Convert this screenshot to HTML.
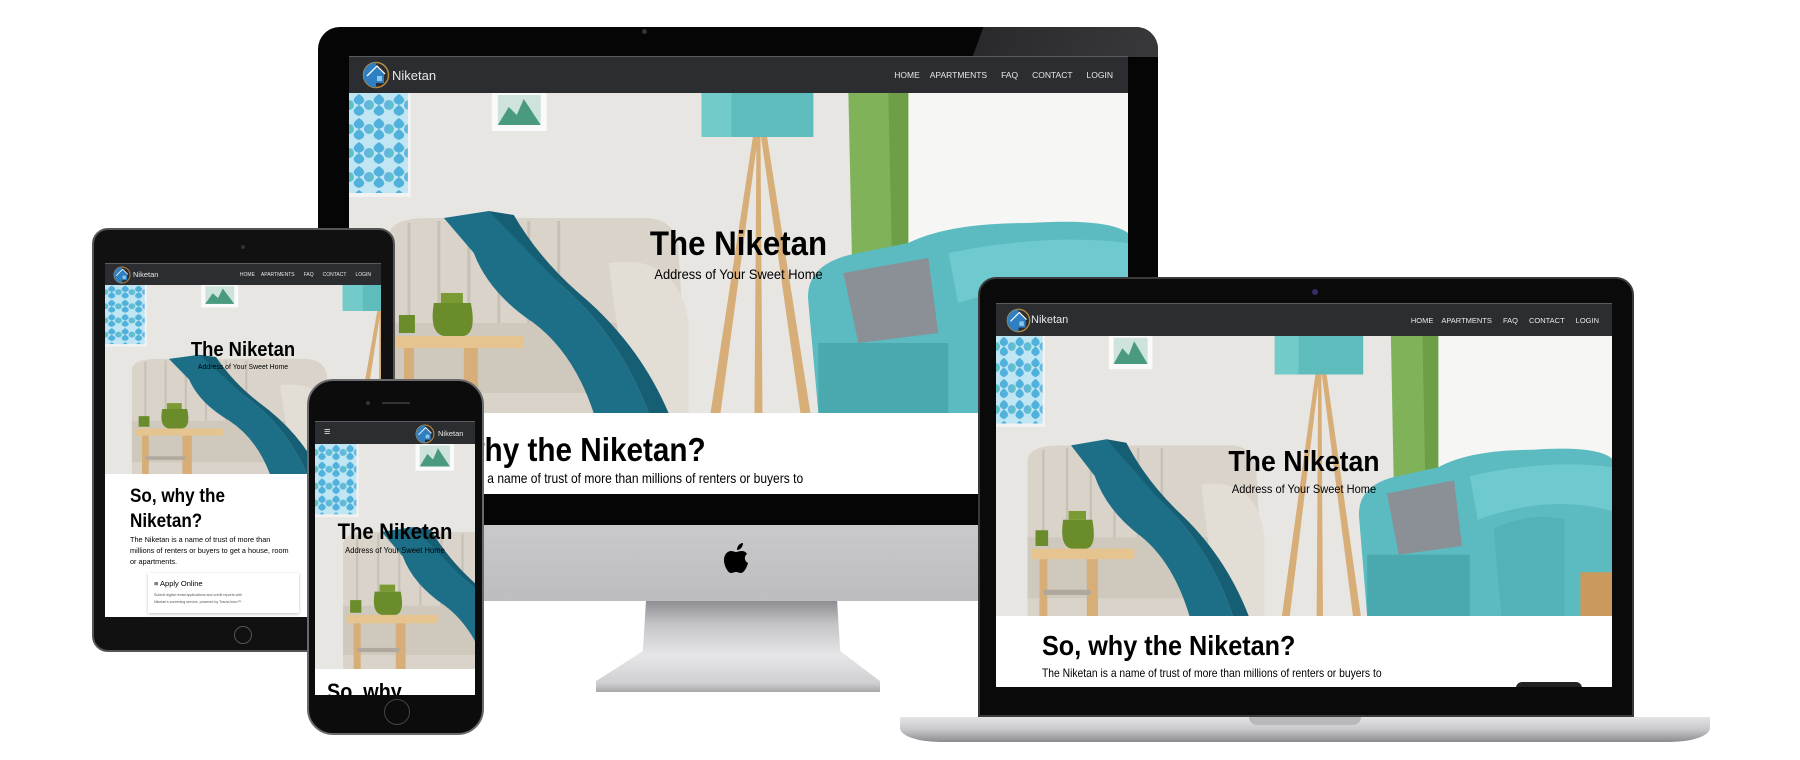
<!DOCTYPE html>
<html><head><meta charset="utf-8"><style>
*{margin:0;padding:0;box-sizing:border-box}
body{width:1800px;height:760px;background:#fff;position:relative;overflow:hidden;font-family:"Liberation Sans",Arial,sans-serif}
.a{position:absolute}
.nav{position:absolute;left:0;top:0;width:100%;background:#2b2d31;border-top:1px solid #5a5c60;color:#e8e8e8}
.nav .links{position:absolute;right:0;top:0;height:100%;display:flex;align-items:center}
.white{position:absolute;left:0;width:100%;background:#fff;overflow:hidden}
.hero{position:absolute;left:0;width:100%;overflow:hidden}
.hero svg{position:absolute;left:0;top:0;width:100%;height:100%}
.ht{position:absolute;left:0;width:100%;text-align:center;color:#000;transform:scaleX(.92)}
.ht b{display:block;font-weight:bold}
.scr{position:absolute;overflow:hidden;background:#fff}
.cx{transform:scaleX(.9);transform-origin:0 0}
.cp{transform:scaleX(.86);transform-origin:0 0}
</style></head><body>
<svg width="0" height="0" style="position:absolute">
<defs>
<pattern id="mos" width="20" height="24" patternUnits="userSpaceOnUse">
<rect width="20" height="24" fill="#bfe6f2"/>
<path d="M10 1 C16 5 18 9 10 12 C2 9 4 5 10 1Z M10 12 C16 16 18 20 10 23 C2 20 4 16 10 12Z" fill="#4fb1dc"/>
<circle cx="0" cy="12" r="5" fill="#5cc1c9"/><circle cx="20" cy="12" r="5" fill="#63b6e0"/>
</pattern>
<symbol id="room" viewBox="0 0 780 320" preserveAspectRatio="none">
<rect width="780" height="320" fill="#e8e6e2"/>
<rect x="560" y="0" width="220" height="200" fill="#f6f6f4"/>
<rect x="560" y="150" width="220" height="60" fill="#ecebe8"/>
<rect x="0" y="0" width="62" height="104" fill="#f2f2f2"/>
<rect x="0" y="0" width="59" height="100" fill="url(#mos)"/>
<rect x="143" y="0" width="55" height="38" fill="#fafafa"/>
<path d="M149 32 L160 14 L168 22 L175 6 L192 32Z" fill="#2f8a6c"/>
<rect x="149" y="2" width="43" height="30" fill="#7ab8a4" opacity=".35"/>
<path d="M500 0 H560 V230 H505Z" fill="#80b25a"/>
<path d="M540 0 H560 V230 H545Z" fill="#6d9f48"/>
<path d="M405 40 L362 320 H372 L410 40Z M412 40 L452 320 H462 L418 40Z M408 40 L406 320 H414 L412 40Z" fill="#d8ae78"/>
<rect x="353" y="0" width="112" height="44" fill="#5ebcbc"/>
<rect x="353" y="0" width="30" height="44" fill="#72cbc9"/>
<path d="M40 140 Q45 125 80 125 L300 125 Q330 128 330 160 L340 320 H40Z" fill="#d9d3ca"/>
<path d="M60 130 V230 M90 128 V230 M120 128 V230 M150 128 V230 M180 128 V230 M210 128 V230" stroke="#c7c0b5" stroke-width="3"/>
<path d="M40 230 H330 V300 H40Z" fill="#cfc8bd"/>
<path d="M260 170 Q330 160 340 230 V320 H280Z" fill="#e2ddd5"/>
<path d="M95 125 L140 118 Q175 150 210 190 Q270 240 300 320 H245 Q225 260 185 230 Q140 200 125 160Z" fill="#1d6f87"/>
<path d="M140 118 L165 122 Q190 165 230 200 Q290 250 320 320 H300 Q270 240 210 190Z" fill="#165e74"/>
<path d="M460 210 Q455 170 510 160 L560 150 Q600 130 680 130 Q760 125 780 140 V320 H470Z" fill="#5cbbc0"/>
<path d="M600 160 Q700 140 780 150 V200 Q700 180 610 210Z" fill="#6fcad0"/>
<path d="M495 180 L580 165 L590 240 L510 250Z" fill="#8b8f96"/>
<path d="M470 250 H600 V320 H470Z" fill="#4aa9ae"/>
<path d="M630 220 Q680 200 720 210 V320 H640Z" fill="#52b2b7"/>
<rect x="45" y="243" width="130" height="12" fill="#e5c48f"/>
<rect x="115" y="255" width="14" height="65" fill="#d8ae78"/>
<rect x="55" y="255" width="10" height="65" fill="#d8ae78"/>
<rect x="60" y="290" width="60" height="6" fill="#b0a89c"/>
<path d="M85 210 Q80 240 95 243 H115 Q128 240 122 210 Z" fill="#6b8c2a"/>
<rect x="92" y="200" width="22" height="10" fill="#7a9a33"/>
<path d="M50 222 H66 V240 H50Z" fill="#6b8c2a"/>
<rect x="740" y="270" width="40" height="50" fill="#c99a5c"/>
</symbol>
<symbol id="logo" viewBox="0 0 28 28">
<circle cx="14" cy="14" r="12.5" fill="none" stroke="#b58a3c" stroke-width="1.5"/>
<path d="M14 1.5 A12.5 12.5 0 0 0 14 26.5Z" fill="#2f7fc1"/>
<path d="M6 15 L15 6 L22 13 V22 H10 V15Z" fill="#2f7fc1"/>
<path d="M5 15 L15 5 L23 13" fill="none" stroke="#fff" stroke-width="1.3"/>
<rect x="15" y="15" width="5" height="5" fill="#8cc8ee"/>
</symbol>
</defs></svg>

<!-- iMac -->
<div class="a" style="left:318px;top:27px;width:840px;height:498px;background:#050505;border-radius:22px 22px 0 0;overflow:hidden">
 <div class="a" style="left:660px;top:0;width:200px;height:30px;background:linear-gradient(90deg,#2a2a2c,#3a3a3c);transform:skewX(-20deg)"></div>
 <div class="a" style="left:324px;top:2px;width:5px;height:5px;border-radius:50%;background:#333"></div>
</div>
<div class="a" style="left:318px;top:525px;width:840px;height:76px;background:linear-gradient(#c9c9cc,#bdbdc1);border-radius:0 0 8px 8px"></div>
<svg class="a" style="left:724px;top:542px" width="28" height="34" viewBox="0 0 28 34"><path d="M19 1 C19 5 16 8 13 8 C13 4 16 1 19 1Z M23 12 C20 14 20 19 24 21 C23 25 20 31 17 31 C15 31 14 30 12 30 C10 30 9 31 7 31 C4 31 0 24 0 18 C0 12 4 9 7 9 C9 9 11 10 12 10 C13 10 15 9 18 9 C20 9 22 10 23 12Z" fill="#000"/></svg>
<div class="a" style="left:596px;top:601px;width:284px;height:91px;background:linear-gradient(#8e8e92,#c4c4c7 25%,#e6e6e8 60%,#d0d0d3 90%,#a8a8ab);clip-path:polygon(17.6% 0,84.9% 0,86% 55%,100% 88%,100% 100%,0 100%,0 88%,16.5% 55%)"></div>
<div class="scr" style="left:349px;top:56px;width:779px;height:438px">
 <div class="nav" style="height:37px">
  <svg class="a" style="left:13px;top:4px" width="28" height="28"><use href="#logo"/></svg>
  <span class="a" style="left:43px;top:11px;font-size:13px">Niketan</span>
  <div class="links" style="font-size:8.5px;padding-right:15px;gap:10px"><span>HOME</span><span>APARTMENTS</span><span style="margin-left:4px">FAQ</span><span style="margin-left:4px">CONTACT</span><span style="margin-left:4px">LOGIN</span></div>
 </div>
 <div class="hero" style="top:37px;height:320px"><svg viewBox="0 0 780 320" preserveAspectRatio="none"><use href="#room" width="780" height="320"/></svg>
  <div class="ht" style="top:132px"><b style="font-size:34px">The Niketan</b><span style="font-size:14px;display:block;margin-top:2px">Address of Your Sweet Home</span></div>
 </div>
 <div class="white" style="top:357px;height:81px">
  <div class="a cx" style="left:58px;top:18px;font-size:33px;font-weight:bold;white-space:nowrap">So, why the Niketan?</div>
  <div class="a cp" style="left:58px;top:57px;font-size:14px;white-space:nowrap">The Niketan is a name of trust of more than millions of renters or buyers to</div>
 </div>
</div>

<!-- Laptop -->
<div class="a" style="left:978px;top:277px;width:656px;height:440px;background:#0a0a0a;border:2px solid #3a3a3c;border-radius:18px 18px 0 0">
 <div class="a" style="left:332px;top:10px;width:6px;height:6px;border-radius:50%;background:#3a2e6a"></div>
</div>
<div class="a" style="left:900px;top:717px;width:810px;height:25px;background:linear-gradient(#e4e4e6,#c8c8cb 50%,#8c8c90);border-radius:0 0 40px 40px / 0 0 14px 14px"></div>
<div class="a" style="left:1249px;top:717px;width:112px;height:8px;background:#b9b9bc;border-radius:0 0 8px 8px"></div>
<div class="scr" style="left:996px;top:303px;width:616px;height:384px">
 <div class="nav" style="height:33px">
  <svg class="a" style="left:10px;top:4px" width="25" height="25"><use href="#logo"/></svg>
  <span class="a" style="left:35px;top:10px;font-size:11px">Niketan</span>
  <div class="links" style="font-size:7.5px;padding-right:13px;gap:8px"><span>HOME</span><span>APARTMENTS</span><span style="margin-left:3px">FAQ</span><span style="margin-left:3px">CONTACT</span><span style="margin-left:3px">LOGIN</span></div>
 </div>
 <div class="hero" style="top:33px;height:280px"><svg viewBox="0 0 616 280" preserveAspectRatio="none"><use href="#room" width="616" height="280"/></svg>
  <div class="ht" style="top:110px"><b style="font-size:29px">The Niketan</b><span style="font-size:12px;display:block;margin-top:3px">Address of Your Sweet Home</span></div>
 </div>
 <div class="white" style="top:313px;height:71px">
  <div class="a cx" style="left:46px;top:14px;font-size:28px;font-weight:bold;white-space:nowrap">So, why the Niketan?</div>
  <div class="a cp" style="left:46px;top:50px;font-size:12px;white-space:nowrap">The Niketan is a name of trust of more than millions of renters or buyers to</div>
  <div class="a" style="left:520px;top:66px;width:66px;height:14px;background:#222;border-radius:6px"></div>
 </div>
</div>

<!-- Tablet -->
<div class="a" style="left:92px;top:228px;width:303px;height:424px;background:#111;border:2px solid #555;border-radius:16px">
 <div class="a" style="left:147px;top:15px;width:4px;height:4px;border-radius:50%;background:#333"></div>
 <div class="a" style="left:140px;top:396px;width:18px;height:18px;border-radius:50%;border:1px solid #555"></div>
</div>
<div class="scr" style="left:105px;top:263px;width:276px;height:354px">
 <div class="nav" style="height:22px">
  <svg class="a" style="left:8px;top:2px" width="18" height="18"><use href="#logo"/></svg>
  <span class="a" style="left:28px;top:6px;font-size:7.5px">Niketan</span>
  <div class="links" style="font-size:5px;padding-right:10px;gap:6px"><span>HOME</span><span>APARTMENTS</span><span style="margin-left:3px">FAQ</span><span style="margin-left:3px">CONTACT</span><span style="margin-left:3px">LOGIN</span></div>
 </div>
 <div class="hero" style="top:22px;height:189px"><svg viewBox="0 0 276 189" preserveAspectRatio="none"><use href="#room" width="525" height="189"/></svg>
  <div class="ht" style="top:54px"><b style="font-size:20px">The Niketan</b><span style="font-size:7.5px;display:block">Address of Your Sweet Home</span></div>
 </div>
 <div class="white" style="top:211px;height:143px">
  <div class="a cx" style="left:25px;top:10px;font-size:19px;font-weight:bold;line-height:25px">So, why the<br>Niketan?</div>
  <div class="a" style="left:25px;top:60px;font-size:7.3px;line-height:11px;white-space:nowrap">The Niketan is a name of trust of more than<br>millions of renters or buyers to get a house, room<br>or apartments.</div>
  <div class="a" style="left:43px;top:99px;width:151px;height:40px;box-shadow:0 1px 3px rgba(0,0,0,.25);background:#fff">
   <div class="a" style="left:6px;top:6px;font-size:7.5px">≡ Apply Online</div>
   <div class="a" style="left:6px;top:19px;font-size:3.6px;line-height:7px;color:#555;white-space:nowrap">Submit digital rental applications and credit reports with<br>Niketan's screening service, powered by TransUnion™.</div>
  </div>
 </div>
</div>

<!-- Phone -->
<div class="a" style="left:307px;top:379px;width:177px;height:356px;background:#0c0c0c;border:2px solid #6a6a6c;border-radius:26px">
 <div class="a" style="left:57px;top:20px;width:4px;height:4px;border-radius:50%;background:#334"></div>
 <div class="a" style="left:73px;top:21px;width:28px;height:2px;background:#333"></div>
 <div class="a" style="left:75px;top:318px;width:26px;height:26px;border-radius:50%;border:1px solid #444"></div>
</div>
<div class="scr" style="left:315px;top:421px;width:160px;height:274px">
 <div class="nav" style="height:23px">
  <span class="a" style="left:9px;top:4px;font-size:11px">≡</span>
  <svg class="a" style="left:100px;top:2px" width="20" height="20"><use href="#logo"/></svg>
  <span class="a" style="left:123px;top:7px;font-size:7.5px">Niketan</span>
 </div>
 <div class="hero" style="top:23px;height:225px"><svg viewBox="0 0 160 225" preserveAspectRatio="none"><use href="#room" width="548" height="225"/></svg>
  <div class="ht" style="top:75px"><b style="font-size:22px;white-space:nowrap">The Niketan</b><span style="font-size:8.3px;display:block;white-space:nowrap">Address of Your Sweet Home</span></div>
 </div>
 <div class="white" style="top:248px;height:26px">
  <div class="a cx" style="left:12px;top:10px;font-size:22px;font-weight:bold;white-space:nowrap">So, why</div>
 </div>
</div>
</body></html>
